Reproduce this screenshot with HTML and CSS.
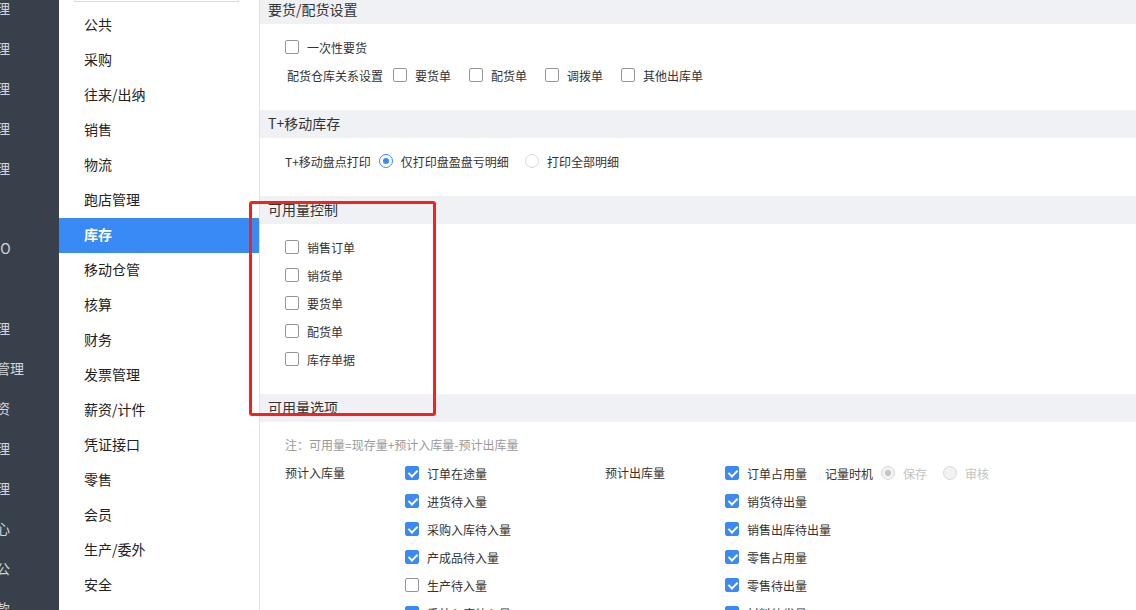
FILE: index.html
```html
<!DOCTYPE html>
<html lang="zh-CN">
<head>
  <meta charset="UTF-8" />
  <title>库存设置</title>
  <link rel="stylesheet" href="styles.css">
</head>
<body>
<div class="app">

  <aside class="nav-dark">
    <div class="nav-dark-list">
      <div class="nav-dark-item">采购管理</div>
      <div class="nav-dark-item">销售管理</div>
      <div class="nav-dark-item">库存管理</div>
      <div class="nav-dark-item">生产管理</div>
      <div class="nav-dark-item">财务管理</div>
      <div class="nav-dark-item"></div>
      <div class="nav-dark-item">电商O2O</div>
      <div class="nav-dark-item"></div>
      <div class="nav-dark-item">资产管理</div>
      <div class="nav-dark-item">零售店管理</div>
      <div class="nav-dark-item">人事工资</div>
      <div class="nav-dark-item">成本管理</div>
      <div class="nav-dark-item">系统管理</div>
      <div class="nav-dark-item">报表中心</div>
      <div class="nav-dark-item">协同办公</div>
      <div class="nav-dark-item">应收账款</div>
    </div>
  </aside>

  <aside class="menu">
    <div class="menu-search"></div>
    <ul class="menu-list">
      <li>公共</li>
      <li>采购</li>
      <li>往来/出纳</li>
      <li>销售</li>
      <li>物流</li>
      <li>跑店管理</li>
      <li class="active">库存</li>
      <li>移动仓管</li>
      <li>核算</li>
      <li>财务</li>
      <li>发票管理</li>
      <li>薪资/计件</li>
      <li>凭证接口</li>
      <li>零售</li>
      <li>会员</li>
      <li>生产/委外</li>
      <li>安全</li>
    </ul>
  </aside>

  <main class="content">
    <section class="sec">
      <div class="sec-title">要货/配货设置</div>
      <div class="sec-body">
        <div class="row">
          <label class="check"><span class="cb"></span>一次性要货</label>
        </div>
        <div class="row">
          <span class="row-label first">配货仓库关系设置</span>
          <label class="check"><span class="cb"></span>要货单</label>
          <label class="check"><span class="cb"></span>配货单</label>
          <label class="check"><span class="cb"></span>调拨单</label>
          <label class="check"><span class="cb"></span>其他出库单</label>
        </div>
      </div>
    </section>

    <section class="sec">
      <div class="sec-title">T+移动库存</div>
      <div class="sec-body">
        <div class="row">
          <span class="row-label">T+移动盘点打印</span>
          <label class="check radio"><span class="rd on"></span>仅打印盘盈盘亏明细</label>
          <label class="check radio"><span class="rd"></span>打印全部明细</label>
        </div>
      </div>
    </section>

    <section class="sec">
      <div class="sec-title">可用量控制</div>
      <div class="sec-body">
        <div class="row"><label class="check"><span class="cb"></span>销售订单</label></div>
        <div class="row"><label class="check"><span class="cb"></span>销货单</label></div>
        <div class="row"><label class="check"><span class="cb"></span>要货单</label></div>
        <div class="row"><label class="check"><span class="cb"></span>配货单</label></div>
        <div class="row"><label class="check"><span class="cb"></span>库存单据</label></div>
      </div>
    </section>

    <section class="sec">
      <div class="sec-title">可用量选项</div>
      <div class="sec-body">
        <div class="note">注：可用量=现存量+预计入库量-预计出库量</div>
        <div class="opt">
          <div class="opt-group">
            <div class="opt-name">预计入库量</div>
            <div class="opt-list in">
              <div class="row"><label class="check"><span class="cb on"></span>订单在途量</label></div>
              <div class="row"><label class="check"><span class="cb on"></span>进货待入量</label></div>
              <div class="row"><label class="check"><span class="cb on"></span>采购入库待入量</label></div>
              <div class="row"><label class="check"><span class="cb on"></span>产成品待入量</label></div>
              <div class="row"><label class="check"><span class="cb"></span>生产待入量</label></div>
              <div class="row"><label class="check"><span class="cb on"></span>委外入库待入量</label></div>
            </div>
          </div>
          <div class="opt-group">
            <div class="opt-name">预计出库量</div>
            <div class="opt-list">
              <div class="row">
                <label class="check"><span class="cb on"></span>订单占用量</label>
                <span class="row-label">记量时机</span>
                <label class="check radio disabled"><span class="rd on"></span>保存</label>
                <label class="check radio disabled"><span class="rd"></span>审核</label>
              </div>
              <div class="row"><label class="check"><span class="cb on"></span>销货待出量</label></div>
              <div class="row"><label class="check"><span class="cb on"></span>销售出库待出量</label></div>
              <div class="row"><label class="check"><span class="cb on"></span>零售占用量</label></div>
              <div class="row"><label class="check"><span class="cb on"></span>零售待出量</label></div>
              <div class="row"><label class="check"><span class="cb on"></span>材料待发量</label></div>
            </div>
          </div>
        </div>
      </div>
    </section>
  </main>

  <!-- 标注框 -->
  <div class="mark"></div>
</div>
</body>
</html>
```

FILE: styles.css
```css
* {
  margin: 0; padding: 0;
  box-sizing: border-box;
}

html, body {
  height: 100%;
  overflow: hidden;
}

body {
  font-family: "Microsoft YaHei", "Noto Sans CJK SC", sans-serif;
  font-size: 12px;
  color: #333;
  background: #fff;
}

.app {
  display: flex;
  height: 610px;
  position: relative;
}

/* 左侧深色导航 */
.nav-dark {
  width: 59px;
  flex: none;
  background: #38404c;
  overflow: hidden;
}

.nav-dark-list {
  margin-top: -12px;
}

.nav-dark-item {
  height: 40px;
  line-height: 40px;
  margin-left: -46px;
  font-size: 14px;
  color: #d3d6db;
  white-space: nowrap;
}

/* 二级菜单 */
.menu {
  width: 201px;
  flex: none;
  border-right: 1px solid #e2e2e2;
  background: #fff;
  overflow: hidden;
}

.menu-search {
  height: 32px;
  margin: -30px 20px 0 15px;
  border: 1px solid #dcdcdc;
}

.menu-list {
  list-style: none;
  margin-top: 6px;
}

.menu-list li {
  height: 35px;
  line-height: 33px;
  padding-left: 25px;
  font-size: 14px;
  color: #222;
}

.menu-list li.active {
  background: #3a8af6;
  color: #fff;
  font-weight: bold;
}

/* 内容区 */
.content {
  flex: 1;
  overflow: hidden;
}

.sec:first-child {
  margin-top: -4px;
}

.sec-title {
  height: 28px;
  line-height: 27px;
  padding-left: 8px;
  background: #f0f1f5;
  font-size: 14px;
  color: #333;
}

.sec-body {
  padding: 9px 25px 21px;
}

.row {
  height: 28px;
  display: flex;
  align-items: center;
  white-space: nowrap;
}

.row-label {
  margin-right: 8px;
}

.row-label.first {
  margin-left: 2px;
  margin-right: 10px;
}

.check {
  display: inline-flex;
  align-items: center;
  margin-right: 18px;
}

.check.radio {
  margin-right: 16px;
}

.check.disabled {
  color: #c2c2c2;
}

.cb {
  width: 14px;
  height: 14px;
  flex: none;
  margin-right: 8px;
  border: 1px solid #959595;
  border-radius: 2px;
  position: relative;
}

.cb.on {
  background: #3a8af6;
  border-color: #3a8af6;
}

.cb.on::after {
  content: "";
  position: absolute;
  left: 4px;
  top: 1px;
  width: 4px;
  height: 7px;
  border: solid #fff;
  border-width: 0 2px 2px 0;
  transform: rotate(45deg);
}

.rd {
  width: 14px;
  height: 14px;
  flex: none;
  margin-right: 8px;
  border: 1px solid #dadada;
  border-radius: 50%;
  background: #fff;
  position: relative;
}

.rd.on {
  border-color: #3a8af6;
}

.rd.on::after {
  content: "";
  position: absolute;
  left: 3px;
  top: 3px;
  width: 6px;
  height: 6px;
  border-radius: 50%;
  background: #3a8af6;
}

.disabled .rd {
  background: #f2f2f2;
  border-color: #d9d9d9;
}

.disabled .rd.on::after {
  background: #c4c4c4;
}

.note {
  height: 28px;
  line-height: 28px;
  color: #9a9a9a;
}

.opt {
  display: flex;
}

.opt-group {
  display: flex;
}

.opt-name {
  width: 120px;
  height: 28px;
  line-height: 28px;
}

.opt-list.in {
  width: 200px;
}

/* 红色标注框 */
.mark {
  position: absolute;
  left: 249px;
  top: 201px;
  width: 187px;
  height: 215px;
  border: 3px solid #f2231d;
  border-radius: 3px;
  pointer-events: none;
}
```
